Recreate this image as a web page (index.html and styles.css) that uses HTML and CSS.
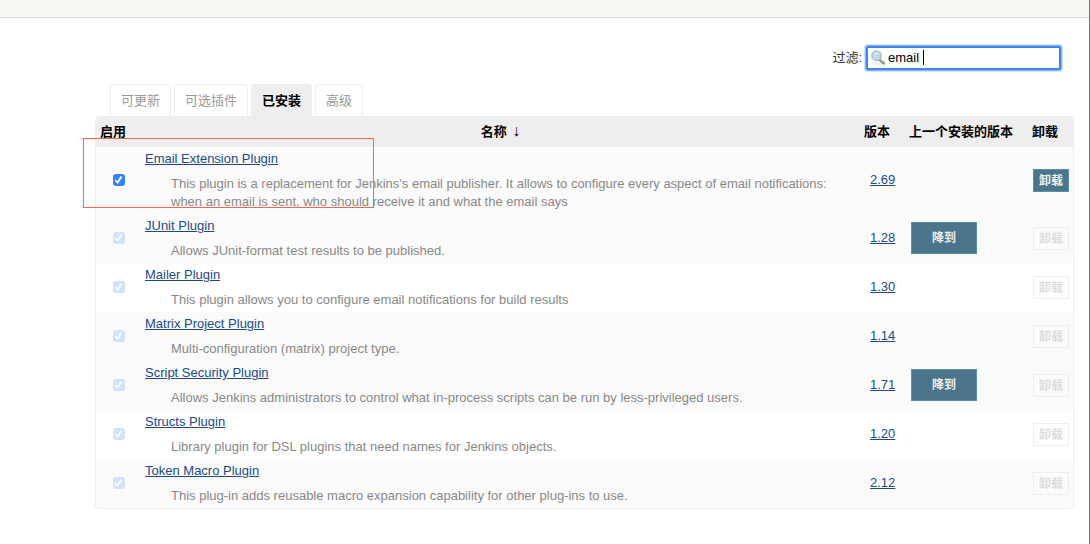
FILE: index.html
```html
<!DOCTYPE html>
<html lang="zh-CN">
<head>
<meta charset="utf-8">
<title>插件管理</title>
<link rel="stylesheet" href="styles.css">
</head>
<body>
<header class="topbar"></header>
<main class="content">
  <div class="filter">
    <label for="filter-box">过滤:</label>
    <div class="search">
      <svg class="search-icon" viewBox="0 0 16 16" aria-hidden="true">
        <ellipse cx="8" cy="13.6" rx="6" ry="1.4" fill="#ececec"/>
        <path d="M9.5 9.5l4.2 3.8" stroke="#888" stroke-width="2.6" stroke-linecap="round"/>
        <path d="M10 9.4l3.4 3.1" stroke="#d0d0d0" stroke-width="1" stroke-linecap="round"/>
        <circle cx="6.5" cy="5.8" r="4.7" fill="#bcd9f2" stroke="#b3b7c0" stroke-width="1.3"/>
        <path d="M3.6 5.4a3 3 0 0 1 5.4-1.5c-1.4-.3-3.600.1-5.400 1.500z" fill="#eaf5fd"/>
      </svg>
      <input id="filter-box" class="search-input" type="text" value="email ">
      <span class="caret"></span>
    </div>
  </div>
  <nav class="tabs">
    <a class="tab" href="#updates">可更新</a>
    <a class="tab" href="#available">可选插件</a>
    <a class="tab tab-active" href="#installed">已安装</a>
    <a class="tab" href="#advanced">高级</a>
  </nav>
  <div class="plugins-area">
  <table class="plugins">
    <colgroup><col class="col-enable"><col><col class="col-version"><col class="col-previous"><col class="col-remove"></colgroup>
    <thead>
      <tr><th>启用</th><th class="name-head">名称 <span class="sort">↓</span></th><th>版本</th><th>上一个安装的版本</th><th>卸载</th></tr>
    </thead>
    <tbody>
      <tr class="shade">
        <td class="enable"><input class="check" type="checkbox" checked aria-label="Email Extension Plugin"></td>
        <td><a class="link" href="#email-ext">Email Extension Plugin</a><div class="desc">This plugin is a replacement for Jenkins's email publisher. It allows to configure every aspect of email notifications: when an email is sent, who should receive it and what the email says</div></td>
        <td class="version"><a class="link" href="#v">2.69</a></td><td></td>
        <td><button class="remove" type="button">卸载</button></td>
      </tr>
      <tr class="shade">
        <td class="enable"><input class="check" type="checkbox" checked disabled aria-label="JUnit Plugin"></td>
        <td><a class="link" href="#junit">JUnit Plugin</a><div class="desc">Allows JUnit-format test results to be published.</div></td>
        <td class="version"><a class="link" href="#v">1.28</a></td>
        <td class="previous"><button class="downgrade" type="button">降到</button></td>
        <td><button class="remove" type="button" disabled>卸载</button></td>
      </tr>
      <tr>
        <td class="enable"><input class="check" type="checkbox" checked disabled aria-label="Mailer Plugin"></td>
        <td><a class="link" href="#mailer">Mailer Plugin</a><div class="desc">This plugin allows you to configure email notifications for build results</div></td>
        <td class="version"><a class="link" href="#v">1.30</a></td><td></td>
        <td><button class="remove" type="button" disabled>卸载</button></td>
      </tr>
      <tr class="shade">
        <td class="enable"><input class="check" type="checkbox" checked disabled aria-label="Matrix Project Plugin"></td>
        <td><a class="link" href="#matrix">Matrix Project Plugin</a><div class="desc">Multi-configuration (matrix) project type.</div></td>
        <td class="version"><a class="link" href="#v">1.14</a></td><td></td>
        <td><button class="remove" type="button" disabled>卸载</button></td>
      </tr>
      <tr class="shade">
        <td class="enable"><input class="check" type="checkbox" checked disabled aria-label="Script Security Plugin"></td>
        <td><a class="link" href="#script-security">Script Security Plugin</a><div class="desc">Allows Jenkins administrators to control what in-process scripts can be run by less-privileged users.</div></td>
        <td class="version"><a class="link" href="#v">1.71</a></td>
        <td class="previous"><button class="downgrade" type="button">降到</button></td>
        <td><button class="remove" type="button" disabled>卸载</button></td>
      </tr>
      <tr>
        <td class="enable"><input class="check" type="checkbox" checked disabled aria-label="Structs Plugin"></td>
        <td><a class="link" href="#structs">Structs Plugin</a><div class="desc">Library plugin for DSL plugins that need names for Jenkins objects.</div></td>
        <td class="version"><a class="link" href="#v">1.20</a></td><td></td>
        <td><button class="remove" type="button" disabled>卸载</button></td>
      </tr>
      <tr class="shade">
        <td class="enable"><input class="check" type="checkbox" checked disabled aria-label="Token Macro Plugin"></td>
        <td><a class="link" href="#token-macro">Token Macro Plugin</a><div class="desc">This plug-in adds reusable macro expansion capability for other plug-ins to use.</div></td>
        <td class="version"><a class="link" href="#v">2.12</a></td><td></td>
        <td><button class="remove" type="button" disabled>卸载</button></td>
      </tr>
    </tbody>
  </table>
  <div class="highlight"></div>
  </div>
</main>
</body>
</html>
```

FILE: styles.css
```css
* { box-sizing: border-box; }

body {
  margin: 0;
  min-height: 100vh;
  border-right: 1px solid #72767c;
  background: #fff;
  color: #333;
  font-family: "Liberation Sans", "Noto Sans CJK SC", sans-serif;
  font-size: 13px;
  line-height: 18px;
}

.topbar {
  height: 18px;
  background: #f6faf2;
  border-bottom: 1px solid #d3d7cf;
}

.content { padding: 28px 15px 0 95px; }

.filter {
  display: flex;
  justify-content: flex-end;
  align-items: center;
  gap: 4px;
  padding-right: 13px;
}

.search { position: relative; width: 195px; }

.search-input {
  display: block;
  width: 100%;
  height: 24px;
  padding: 0 2px 2px 20px;
  border: 2px solid #3f86ea;
  border-radius: 2px;
  outline: none;
  box-shadow: 0 0 0 1px #8bbaf6, 0 0 0 2px #cfe2fb;
  background: #fff;
  color: #000;
  font: inherit;
}

.search-icon {
  position: absolute;
  left: 4px;
  top: 4px;
  width: 16px;
  height: 16px;
  fill: none;
}

.caret {
  position: absolute;
  left: 57px;
  top: 4px;
  width: 1px;
  height: 15px;
  background: #000;
}

.tabs {
  display: flex;
  gap: 3px;
  padding: 14px 15px 0;
}

.tab {
  height: 32px;
  padding: 0 10px;
  border: 1px solid #eee;
  border-bottom: 0;
  border-radius: 4px 4px 0 0;
  color: #999;
  line-height: 32px;
  text-decoration: none;
}

.tab-active {
  background: #eee;
  color: #000;
  font-weight: bold;
}

.plugins-area { position: relative; }

.plugins {
  width: 100%;
  table-layout: fixed;
  border: 1px solid #eee;
  border-radius: 4px;
  border-spacing: 0;
  overflow: hidden;
}

.col-enable { width: 45px; }
.col-version { width: 45px; }
.col-previous { width: 123px; }
.col-remove { width: 45px; }

.plugins th {
  height: 30px;
  padding: 0 4px;
  background: #eee;
  color: #000;
  text-align: left;
  white-space: nowrap;
}

.plugins .name-head { text-align: center; }

.sort {
  margin-left: 2px;
  font-size: 16px;
  font-weight: normal;
  line-height: 1;
}

.plugins td { padding: 3px 4px; }
.shade { background: #fbfbfb; }
.plugins .enable { padding-bottom: 5px; text-align: center; }

.check {
  appearance: none;
  display: inline-grid;
  place-items: center;
  width: 12px;
  height: 12px;
  margin: 0;
  border-radius: 3px;
  background: #3781fb;
  vertical-align: middle;
}

.check::after {
  content: "";
  width: 8px;
  height: 8px;
  background: #fff;
  clip-path: polygon(0 56%, 16% 42%, 36% 64%, 78% 0, 98% 12%, 40% 98%);
}

.check:disabled { background: #d1e2fc; }

.link { color: #204a87; text-decoration: underline; }
.desc { margin: 7px 26px 0; color: #888; }
.plugins .version { padding: 0 10px 2px; }
.plugins .previous { padding: 0 6px 2px; }

.downgrade,
.remove {
  display: block;
  border: 1px solid #5590aa;
  background: #4b758b;
  color: #eee;
  font: inherit;
  font-size: 12px;
}

.downgrade {
  width: 66px;
  height: 32px;
  padding: 0;
  font-weight: bold;
}

.remove {
  width: 36px;
  height: 23px;
  margin-left: 1px;
  padding: 0;
  font-weight: bold;
}

.remove:disabled {
  border-color: #eee;
  background: transparent;
  color: #ddd;
}

.highlight {
  position: absolute;
  left: -12px;
  top: 22px;
  width: 291px;
  height: 70px;
  border: 1px solid #f4694d;
  pointer-events: none;
}
```
